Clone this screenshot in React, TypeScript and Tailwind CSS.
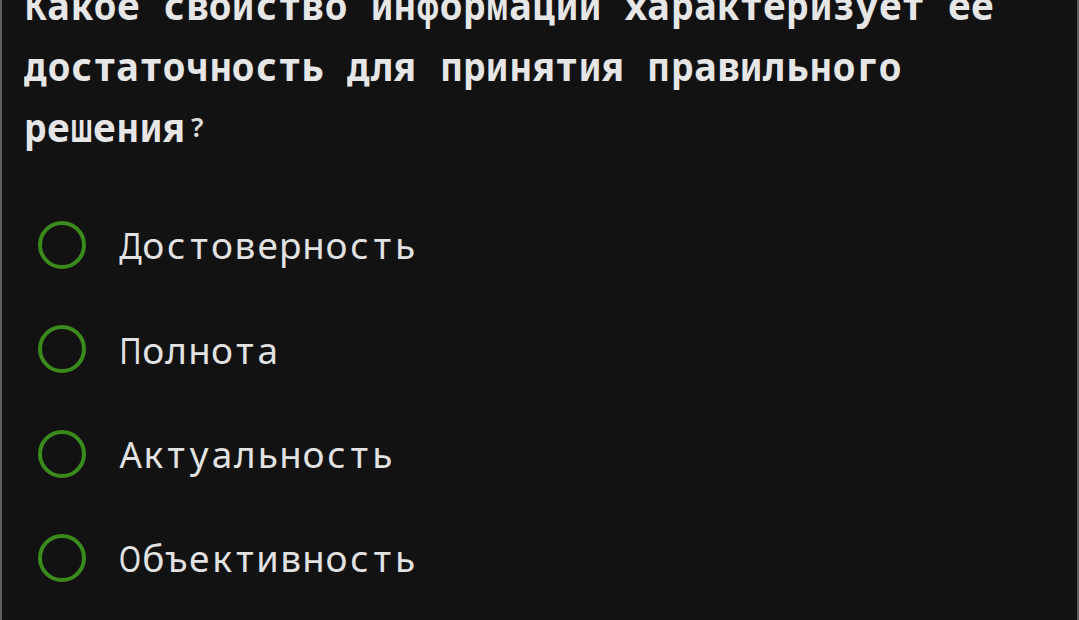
import React from "react";

const question = "Какое свойство информации характеризует ее достаточность для принятия правильного решения";
const options = ["Достоверность", "Полнота", "Актуальность", "Объективность"];

const FAMILY = '"Noto Sans", "Open Sans", sans-serif';

let ctx: CanvasRenderingContext2D | null = null;
// Wide glyphs are squeezed horizontally so every letter stays inside its grid cell.
function glyphScale(ch: string, weight: number, size: number, cell: number): number {
  if (typeof document === "undefined") return 1;
  if (!ctx) ctx = document.createElement("canvas").getContext("2d");
  if (!ctx) return 1;
  ctx.font = `${weight} ${size}px ${FAMILY}`;
  const w = ctx.measureText(ch).width;
  if (!w) return 1;
  return Math.min(1, (cell * 0.98) / w);
}

function Cells({
  text,
  cellClass,
  weight,
  size,
  cell,
}: {
  text: string;
  cellClass: string;
  weight: number;
  size: number;
  cell: number;
}) {
  return (
    <span className="inline-flex whitespace-nowrap">
      {Array.from(text).map((ch, i) => (
        <span key={i} className={cellClass}>
          <span
            className="inline-block shrink-0"
            style={{ transform: `scaleX(${glyphScale(ch, weight, size, cell)})` }}
          >
            {ch}
          </span>
        </span>
      ))}
    </span>
  );
}

export default function App() {
  const words = question.split(" ");
  const qCell = "flex justify-center w-[23.1px] h-[61px] leading-[61px]";
  const oCell = "flex justify-center w-[22.9px]";
  return (
    <div
      className="w-full h-[620px] overflow-hidden bg-[#121212] border-l-2 border-r-2 border-[#5f5f5f]"
      style={{ fontFamily: FAMILY }}
    >
      <div className="mt-[-26px] pl-[22px] pr-6 flex flex-wrap text-[39px] font-bold text-[#e6e6e6]">
        {words.map((w, i) => (
          <React.Fragment key={i}>
            <Cells text={w} cellClass={qCell} weight={700} size={39} cell={23.1} />
            {i < words.length - 1 ? (
              <span className={qCell}>{"\u00a0"}</span>
            ) : (
              <span className={qCell + " text-[27px] font-semibold text-[#dcdcdc]"}>?</span>
            )}
          </React.Fragment>
        ))}
      </div>

      <div className="mt-[36px] flex flex-col">
        {options.map((o) => (
          <div key={o} className="h-[104.3px] flex items-center pl-9">
            <span className="w-12 h-12 rounded-full border-4 border-[#3a8a1c] shrink-0" />
            <span className="ml-[33px] text-[37px] text-[#e2e2e2]">
              <Cells text={o} cellClass={oCell} weight={400} size={37} cell={22.9} />
            </span>
          </div>
        ))}
      </div>
    </div>
  );
}
